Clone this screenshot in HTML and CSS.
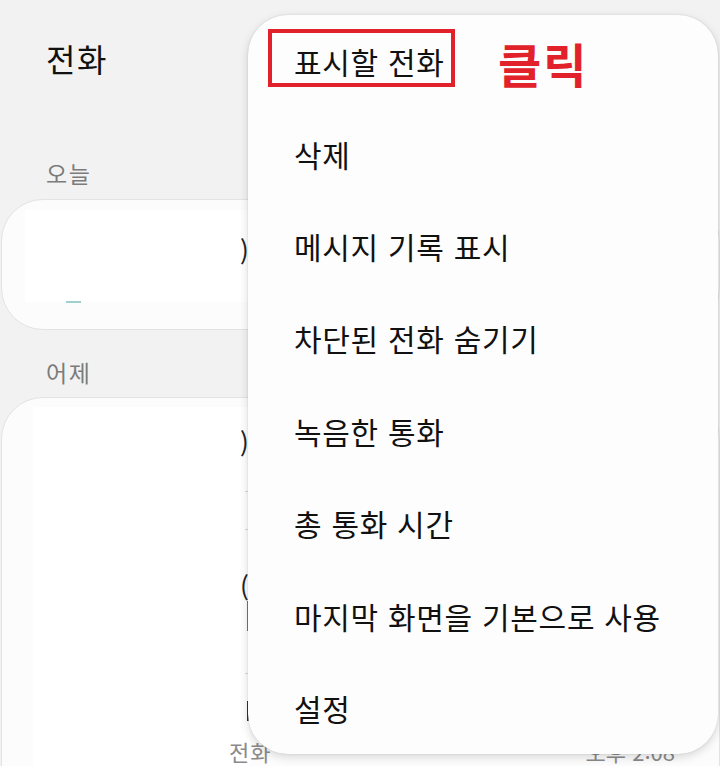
FILE: index.html
```html
<!DOCTYPE html>
<html lang="ko">
<head>
<meta charset="utf-8">
<title>전화</title>
<link rel="stylesheet" href="styles.css">
</head>
<body>
<div class="screen">
  <header class="header"><h1 class="title">전화</h1></header>

  <section class="section">
    <div class="label">오늘</div>
    <div class="card card-today">
      <div class="redact redact-today"><span class="teal"></span></div>
      <div class="frag frag-a">)</div>
    </div>
  </section>

  <section class="section">
    <div class="label label-yesterday">어제</div>
    <div class="card card-yesterday">
      <div class="redact redact-yesterday"></div>
      <div class="frag frag-b">)</div>
      <div class="tick tick-1"></div>
      <div class="tick tick-2"></div>
      <div class="frag frag-c">(</div>
      <div class="bar bar-1"></div>
      <div class="tick tick-3"></div>
      <div class="bar bar-2"></div>
      <div class="last-row">
        <span class="sub">전화</span>
        <span class="time">오후 2:08</span>
      </div>
    </div>
  </section>

  <div class="menu">
    <div class="menu-item">표시할 전화</div>
    <div class="menu-item">삭제</div>
    <div class="menu-item">메시지 기록 표시</div>
    <div class="menu-item">차단된 전화 숨기기</div>
    <div class="menu-item">녹음한 통화</div>
    <div class="menu-item">총 통화 시간</div>
    <div class="menu-item">마지막 화면을 기본으로 사용</div>
    <div class="menu-item">설정</div>
    <div class="highlight"></div>
    <div class="click-note">클릭</div>
  </div>
</div>
</body>
</html>
```
FILE: styles.css
```css
html, body {
  margin: 0;
  padding: 0;
}
body {
  background: #f2f2f2;
  font-family: "Noto Sans CJK KR", "Noto Sans", sans-serif;
  color: #111;
}
.screen {
  position: relative;
  width: 720px;
  height: 766px;
  overflow: hidden;
}
.header {
  padding: 38px 0 0 46px;
}
.title {
  margin: 0;
  font-size: 32px;
  line-height: 40px;
  letter-spacing: 1.5px;
  font-weight: 400;
  color: #111;
}
.section {
  display: flex;
  flex-direction: column;
}
.label {
  margin: 80px 0 0 46px;
  font-size: 23px;
  line-height: 30px;
  letter-spacing: 1.5px;
  color: #7b7b7b;
}
.label-yesterday {
  margin-top: 27px;
}
.card {
  position: relative;
  margin: 11px 0 0 1px;
  background: #fcfcfc;
  border: 1px solid #e3e3e3;
  border-radius: 42px;
  box-sizing: border-box;
}
.card-today {
  height: 131px;
  padding: 10px 0 0 23px;
}
.card-yesterday {
  height: 420px;
  padding: 9px 0 0 31px;
  margin-top: 10px;
}
.redact {
  background: #ffffff;
  position: relative;
}
.redact-today {
  width: 225px;
  height: 92px;
}
.redact-yesterday {
  width: 217px;
  height: 400px;
}
.teal {
  position: absolute;
  left: 41px;
  bottom: -1px;
  width: 15px;
  height: 2px;
  background: #9fd0d0;
}
.frag {
  position: absolute;
  left: 238px;
  font-size: 26px;
  line-height: 30px;
  color: #222;
}
.frag-a { top: 35px; }
.frag-b { top: 29px; }
.frag-c { top: 173px; }
.tick {
  position: absolute;
  left: 243px;
  width: 4px;
  height: 1px;
  background: #d8d8d8;
}
.tick-1 { top: 93px; }
.tick-2 { top: 131px; }
.tick-3 { top: 275px; }
.bar {
  position: absolute;
  left: 245px;
  width: 2px;
  background: #777;
}
.bar-1 { top: 203px; height: 30px; }
.bar-2 { top: 303px; height: 20px; background: #333; }
.last-row {
  position: absolute;
  left: 0;
  right: 0;
  top: 338px;
  display: flex;
  justify-content: space-between;
  font-size: 22px;
  line-height: 30px;
  color: #8a8a8a;
}
.sub { margin-left: 227px; letter-spacing: 1px; }
.time { margin-right: 44px; }
.menu {
  position: absolute;
  left: 248px;
  top: 15px;
  width: 470px;
  height: 739px;
  background: #fdfdfd;
  border-radius: 40px;
  box-shadow: 0 3px 10px rgba(0, 0, 0, 0.15), 0 0 2px rgba(0, 0, 0, 0.12);
  display: flex;
  flex-direction: column;
}
.menu-item {
  height: 92.4px;
  flex: none;
  display: flex;
  align-items: center;
  padding-left: 46px;
  font-size: 30px;
  letter-spacing: 0.7px;
  color: #111;
  white-space: nowrap;
}
.highlight {
  position: absolute;
  left: 20px;
  top: 14px;
  width: 187px;
  height: 58px;
  border: 4px solid #e1222b;
  box-sizing: border-box;
}
.click-note {
  position: absolute;
  left: 250px;
  top: 18px;
  font-size: 47px;
  line-height: 60px;
  letter-spacing: 2px;
  font-weight: 700;
  color: #e1222b;
}
```
